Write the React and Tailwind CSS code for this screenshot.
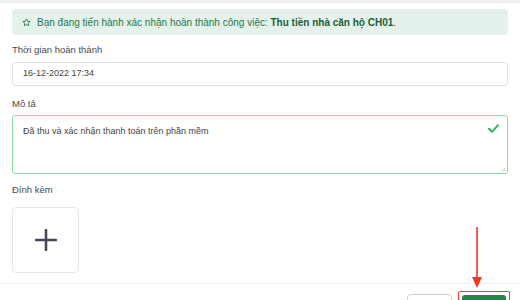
import React from 'react'

function Star() {
  return (
    <svg width="9" height="9" viewBox="0 0 24 24" fill="none" stroke="currentColor" strokeWidth="2.4" strokeLinejoin="round" className="mr-1.5 shrink-0">
      <path d="M12 2.5l2.9 6.2 6.7.7-5 4.6 1.4 6.7L12 17.3l-6 3.4 1.4-6.7-5-4.6 6.7-.7z" />
    </svg>
  )
}

export default function App() {
  return (
    <div className="relative h-[300px] w-[520px] overflow-hidden bg-white text-[10px] text-[#4a4a4a]" style={{ fontFamily: '"Liberation Sans", Arial, sans-serif' }}>
      <div className="h-[3px] bg-[#eeeeee]" />

      <div className="px-3 pt-[6px]">
        <div className="flex h-[26px] items-center rounded bg-[#e5f1eb] px-[10px] text-[#237a47]">
          <Star />
          <span>
            Bạn đang tiến hành xác nhận hoàn thành công việc: <b className="font-bold text-[#1b5e37]">Thu tiền nhà căn hộ CH01</b>.
          </span>
        </div>

        <div className="mt-[9px] text-[9.5px] leading-[12px]">Thời gian hoàn thành</div>
        <div className="mt-[6px] flex h-[24px] items-center rounded-[3px] border border-[#e0e0e0] px-[10px] text-[9px] text-[#444]">
          16-12-2022 17:34
        </div>

        <div className="mt-[12px] text-[9.5px] leading-[12px]">Mô tả</div>
        <div className="relative mt-[5px] h-[59px] rounded-[3px] border border-[#86dfa6] px-[10px] pt-[9px] text-[9px] text-[#444]">
          Đã thu và xác nhận thanh toán trên phần mềm
          <svg className="absolute right-[8px] top-[8px]" width="11" height="9" viewBox="0 0 11 9" fill="none" stroke="#2fb35c" strokeWidth="2" strokeLinecap="round" strokeLinejoin="round">
            <path d="M1 4.8l3 3L10 1.2" />
          </svg>
          <svg className="absolute bottom-[1px] right-[1px]" width="5" height="5" viewBox="0 0 5 5" stroke="#b5b5b5" strokeWidth="0.8">
            <path d="M0.5 4.5L4.5 0.5M2.5 4.5L4.5 2.5" />
          </svg>
        </div>

        <div className="mt-[10px] text-[9.5px] leading-[12px]">Đính kèm</div>
        <div className="mt-[11px] flex h-[66px] w-[67px] items-center justify-center rounded-[4px] border border-[#e6e6e6]">
          <svg width="22" height="22" viewBox="0 0 22 22" stroke="#48455e" strokeWidth="2.6" strokeLinecap="round">
            <path d="M11 1v20M1 11h20" />
          </svg>
        </div>
      </div>

      <div className="mt-[10px] h-px bg-[#eeeeee]" />
      <div className="flex items-start justify-end gap-[6px] pr-[10px] pt-[7px]">
        <div className="mt-[3px] h-[20px] w-[45px] rounded-[4px] border border-[#cfcfcf] bg-white" />
        <div className="rounded-[2px] border border-[#ef3b2c] p-[3px]">
          <div className="h-[20px] w-[44px] rounded-[3px] bg-[#23874a]" />
        </div>
      </div>

      <svg className="absolute left-[471px] top-[227px]" width="12" height="63" viewBox="0 0 12 63">
        <path d="M6 0v52" stroke="#ee3a24" strokeWidth="1.6" />
        <path d="M1 50h10L6 61z" fill="#ee3a24" />
      </svg>
    </div>
  )
}
